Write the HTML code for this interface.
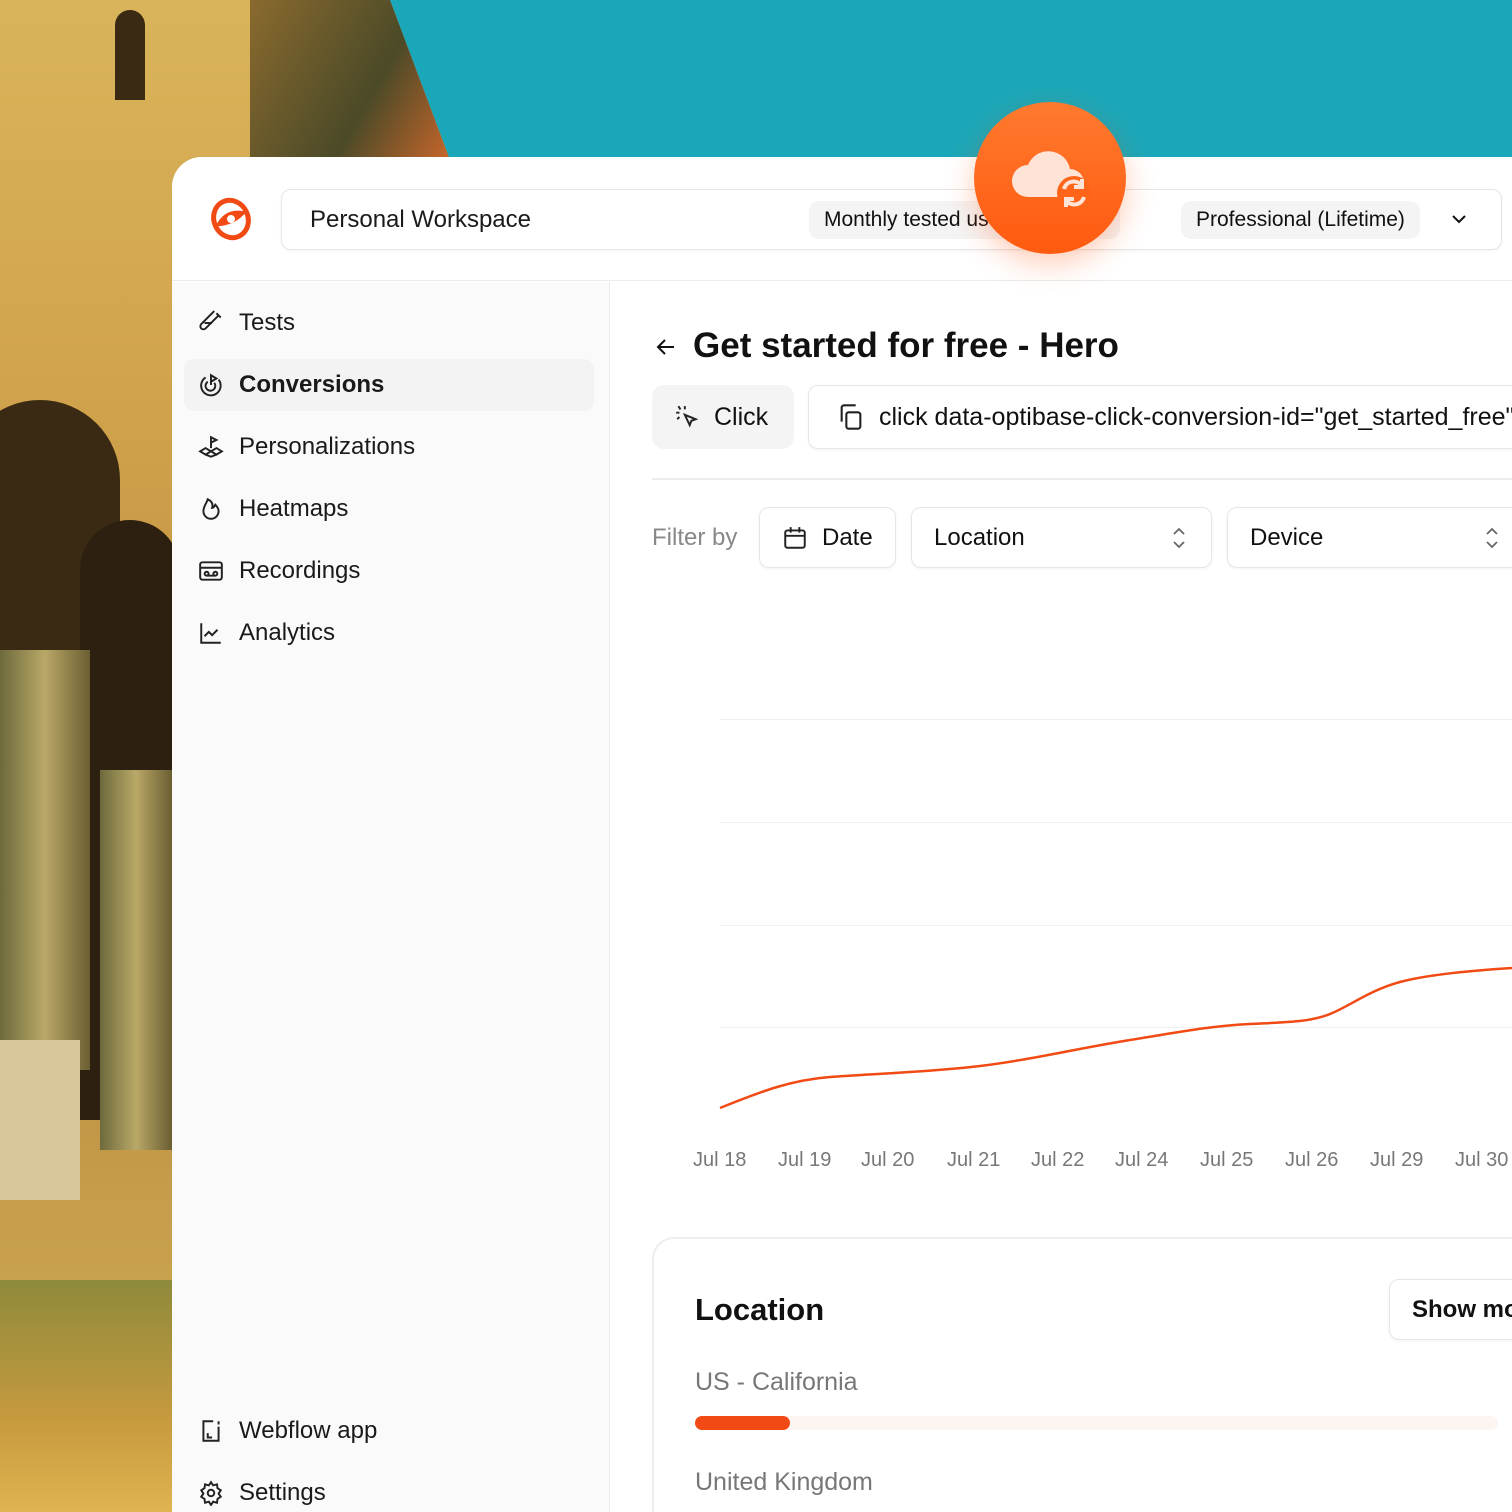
<!DOCTYPE html>
<html><head><meta charset="utf-8"><style>
*{box-sizing:border-box;margin:0;padding:0}
html,body{width:1512px;height:1512px;overflow:hidden}
body{position:relative;font-family:"Liberation Sans",sans-serif;color:#111;background:#1aa7b9}
#wrap{position:absolute;left:0;top:0;width:1512px;height:1512px;overflow:hidden}
.bg{position:absolute;left:0;top:0;width:520px;height:1512px;background:linear-gradient(180deg,#d9b45a 0%,#cfa04a 30%,#b98a3e 60%,#c9a24e 85%,#d8ad52 100%);clip-path:polygon(0 0,390px 0,450px 160px,520px 160px,520px 1512px,0 1512px)}
.arch{position:absolute;background:#3a2a14;border-radius:60px 60px 0 0}
.col{position:absolute;background:linear-gradient(90deg,#6d6a3c,#b9a867,#6b5e32)}
.panel{position:absolute;left:172px;top:157px;width:1400px;height:1355px;background:#fff;border-top-left-radius:30px;overflow:hidden}
.hdr{position:absolute;left:0;top:0;width:100%;height:124px;border-bottom:1px solid #ececec;background:#fff}
.ws{position:absolute;left:109px;top:32px;width:1221px;height:61px;border:1px solid #e6e6e6;border-radius:10px;box-shadow:0 1px 3px rgba(0,0,0,.05)}
.ws .t{position:absolute;left:28px;top:16px;font-size:24px;color:#1a1a1a}
.pill{position:absolute;top:11px;height:38px;background:#f4f4f4;border-radius:10px;font-size:21px;line-height:38px;padding:0 15px;color:#111}
.side{position:absolute;left:0;top:125px;width:438px;height:1300px;background:#fafafa;border-right:1px solid #ececec}
.nav{position:absolute;left:12px;width:410px;height:52px;display:flex;align-items:center;font-size:24px;color:#1a1a1a;border-radius:10px}
.nav svg{margin-left:14px;margin-right:15px}
.nav.on{background:#f3f3f3;font-weight:bold}
.abs{position:absolute}
.btn{position:absolute;border:1px solid #e6e6e6;border-radius:10px;box-shadow:0 1px 3px rgba(0,0,0,.05);background:#fff;font-size:24px;display:flex;align-items:center}
.grid{position:absolute;left:720px;width:800px;height:1px;background:#f0f0f0}
.xl{position:absolute;top:1149px;font-size:20px;color:#777}
</style></head><body><div id="wrap">
<div class="bg">
  <div class="arch" style="left:-40px;top:400px;width:160px;height:300px;border-radius:80px 80px 0 0"></div>
  <div class="arch" style="left:80px;top:520px;width:100px;height:600px;background:#2d2010"></div>
  <div class="arch" style="left:115px;top:10px;width:30px;height:90px;border-radius:15px 15px 0 0"></div>
  <div class="col" style="left:0;top:650px;width:90px;height:420px"></div>
  <div class="col" style="left:100px;top:770px;width:72px;height:380px"></div>
  <div class="abs" style="left:0;top:1040px;width:80px;height:160px;background:#d8c79a"></div>
  <div class="abs" style="left:0;top:1280px;width:172px;height:232px;background:linear-gradient(180deg,#8e8a3c,#c69a3e 60%,#e0b350)"></div>
  <div class="abs" style="left:250px;top:0;width:200px;height:160px;background:linear-gradient(120deg,#8a6a2e,#4b4a28 60%,#c8662a)"></div>
</div>
<div class="panel">
  <div class="hdr">
    <svg class="abs" style="left:37px;top:40px" width="44" height="44" viewBox="0 0 44 44"><g transform="rotate(-25 22 22)"><ellipse cx="22" cy="22" rx="17" ry="19" fill="none" stroke="#f24a14" stroke-width="5"/><path d="M5 22 Q22 8 39 22 Q22 30 5 22z" fill="#f24a14"/><circle cx="22" cy="22" r="4" fill="#fff"/></g></svg>
    <div class="ws"><div class="t">Personal Workspace</div>
      <div class="pill" style="left:527px">Monthly tested users 0 / 5,000</div>
      <div class="pill" style="left:899px">Professional (Lifetime)</div>
      <svg class="abs" style="left:1168px;top:22px" width="18" height="14" viewBox="0 0 18 14"><path d="M3 4l6 6 6-6" fill="none" stroke="#111" stroke-width="2"/></svg>
    </div>
  </div>
  <div class="side">
    <div class="nav" style="top:15px"><svg width="26" height="26" viewBox="0 0 24 24" fill="none" stroke="#222" stroke-width="1.8"><path d="M17 3l4 4M19 5L7 17a2.8 2.8 0 01-4-4L15 1"/><path d="M6 12h7"/></svg>Tests</div>
    <div class="nav on" style="top:77px"><svg width="26" height="26" viewBox="0 0 24 24" fill="none" stroke="#222" stroke-width="1.8"><path d="M7 5a9 9 0 1012 2"/><path d="M9 9a4.5 4.5 0 106 1"/><path d="M12 12V3l5 3-5 3"/></svg>Conversions</div>
    <div class="nav" style="top:139px"><svg width="26" height="26" viewBox="0 0 24 24" fill="none" stroke="#222" stroke-width="1.8"><path d="M12 13V3l5 2.5L12 8"/><path d="M2 16l5-3 5 3 5-3 5 3-5 3-5-3-5 3z"/><path d="M7 19l5 2 5-2"/></svg>Personalizations</div>
    <div class="nav" style="top:201px"><svg width="26" height="26" viewBox="0 0 24 24" fill="none" stroke="#222" stroke-width="1.8"><path d="M9 3c-1 4 -4 6-4 11a7 7 0 0014 0c0-3-2-5-3-6-1 2-2 3-3 3 1-3 0-6-4-8z"/></svg>Heatmaps</div>
    <div class="nav" style="top:263px"><svg width="26" height="26" viewBox="0 0 24 24" fill="none" stroke="#222" stroke-width="1.8"><rect x="2" y="4" width="20" height="16" rx="2"/><path d="M2 9h20"/><circle cx="8" cy="14.5" r="1.8"/><circle cx="16" cy="14.5" r="1.8"/><path d="M8 16.3h8"/></svg>Recordings</div>
    <div class="nav" style="top:325px"><svg width="26" height="26" viewBox="0 0 24 24" fill="none" stroke="#222" stroke-width="1.8"><path d="M3 3v18h18"/><path d="M6 15l4-4 3 3 5-5"/></svg>Analytics</div>
    <div class="nav" style="top:1123px"><svg width="26" height="26" viewBox="0 0 24 24" fill="none" stroke="#222" stroke-width="1.8"><path d="M14 3H5v18h14V8"/><path d="M19 3v3M9 14v4h4"/></svg>Webflow app</div>
    <div class="nav" style="top:1185px"><svg width="26" height="26" viewBox="0 0 24 24" fill="none" stroke="#222" stroke-width="1.8"><circle cx="12" cy="12" r="3"/><path d="M12 2l2 3 3.5-1 .5 3.5 3 2-2 3 2 3-3 2-.5 3.5-3.5-1-2 3-2-3-3.5 1-.5-3.5-3-2 2-3-2-3 3-2L6.5 4 10 5z"/></svg>Settings</div>
  </div>
</div>
<svg class="abs" style="left:654px;top:336px" width="24" height="22" viewBox="0 0 24 22"><path d="M20 11H4M11 4l-7 7 7 7" fill="none" stroke="#111" stroke-width="2"/></svg>
<div class="abs" style="left:693px;top:326px;font-size:35px;font-weight:bold">Get started for free - Hero</div>
<div class="abs" style="left:652px;top:385px;width:142px;height:64px;background:#f4f4f4;border-radius:12px;font-size:25px;display:flex;align-items:center"><svg style="margin:0 14px 0 22px" width="26" height="26" viewBox="0 0 24 24" fill="none" stroke="#222" stroke-width="1.8"><path d="M10 10l10 4-4 1.5-1.5 4z"/><path d="M4 2l2 3M2 8h3M10 2v3M3 14l2-2"/></svg>Click</div>
<div class="btn" style="left:808px;top:385px;width:800px;height:64px;white-space:nowrap;font-size:25px"><svg style="margin:0 14px 0 28px" width="28" height="28" viewBox="0 0 24 24" fill="none" stroke="#222" stroke-width="1.8"><rect x="8" y="8" width="12" height="14" rx="2"/><path d="M4 16V4a2 2 0 012-2h10"/></svg>click data-optibase-click-conversion-id="get_started_free"</div>
<div class="abs" style="left:652px;top:478px;width:900px;height:2px;background:#ececec"></div>
<div class="abs" style="left:652px;top:524px;font-size:24px;color:#888">Filter by</div>
<div class="btn" style="left:759px;top:507px;width:137px;height:61px"><svg style="margin:0 14px 0 22px" width="26" height="26" viewBox="0 0 24 24" fill="none" stroke="#222" stroke-width="1.8"><rect x="3" y="5" width="18" height="16" rx="2"/><path d="M3 10h18M8 2v5M16 2v5"/></svg>Date</div>
<div class="btn" style="left:911px;top:507px;width:301px;height:61px;padding-left:22px">Location<svg style="position:absolute;right:24px" width="16" height="26" viewBox="0 0 16 26"><path d="M3 9l5-5 5 5M3 17l5 5 5-5" fill="none" stroke="#666" stroke-width="1.8"/></svg></div>
<div class="btn" style="left:1227px;top:507px;width:300px;height:61px;padding-left:22px">Device<svg style="position:absolute;left:256px" width="16" height="26" viewBox="0 0 16 26"><path d="M3 9l5-5 5 5M3 17l5 5 5-5" fill="none" stroke="#666" stroke-width="1.8"/></svg></div>
<div class="grid" style="top:719px"></div><div class="grid" style="top:822px"></div><div class="grid" style="top:925px"></div><div class="grid" style="top:1027px"></div>
<svg class="abs" style="left:0;top:0" width="1512" height="1512"><path d="M720 1108 C760 1092 790 1080 830 1077 S930 1072 980 1066 S1080 1048 1130 1040 S1210 1026 1250 1024 S1310 1022 1330 1014 S1370 990 1400 982 S1480 970 1512 968" fill="none" stroke="#f24a14" stroke-width="2.5"/></svg>
<div class="xl" style="left:693px">Jul 18</div><div class="xl" style="left:778px">Jul 19</div><div class="xl" style="left:861px">Jul 20</div><div class="xl" style="left:947px">Jul 21</div><div class="xl" style="left:1031px">Jul 22</div><div class="xl" style="left:1115px">Jul 24</div><div class="xl" style="left:1200px">Jul 25</div><div class="xl" style="left:1285px">Jul 26</div><div class="xl" style="left:1370px">Jul 29</div><div class="xl" style="left:1455px">Jul 30</div>
<div class="abs" style="left:652px;top:1237px;width:900px;height:320px;border:2px solid #eeeeee;border-radius:22px;background:#fff"></div>
<div class="abs" style="left:695px;top:1292px;font-size:31px;font-weight:bold">Location</div>
<div class="btn" style="left:1389px;top:1279px;width:200px;height:61px;padding-left:22px;white-space:nowrap;font-size:24px;font-weight:bold">Show more</div>
<div class="abs" style="left:695px;top:1368px;font-size:25px;color:#777">US - California</div>
<div class="abs" style="left:695px;top:1416px;width:803px;height:14px;background:#fdf5f2;border-radius:7px"></div>
<div class="abs" style="left:695px;top:1416px;width:95px;height:14px;background:#f24a14;border-radius:7px"></div>
<div class="abs" style="left:695px;top:1468px;font-size:25px;color:#777">United Kingdom</div>
<div class="abs" style="left:974px;top:102px;width:152px;height:152px;border-radius:50%;background:linear-gradient(180deg,#ff7a2e,#ff5a10);box-shadow:0 10px 30px rgba(255,90,20,.3)"></div>
<svg class="abs" style="left:1008px;top:145px" width="88" height="70" viewBox="0 0 88 70"><path d="M20 52a16 16 0 010-32 22 22 0 0142 4 14 14 0 010 28z" fill="#ffe3d6"/><circle cx="66" cy="48" r="17" fill="#ff6418"/><path d="M56 44a10 10 0 0118-3M76 52a10 10 0 01-18 3" fill="none" stroke="#ffe3d6" stroke-width="4"/><path d="M74 34v8h-8M58 62v-8h8" fill="none" stroke="#ffe3d6" stroke-width="4"/></svg>
</div></body></html>
